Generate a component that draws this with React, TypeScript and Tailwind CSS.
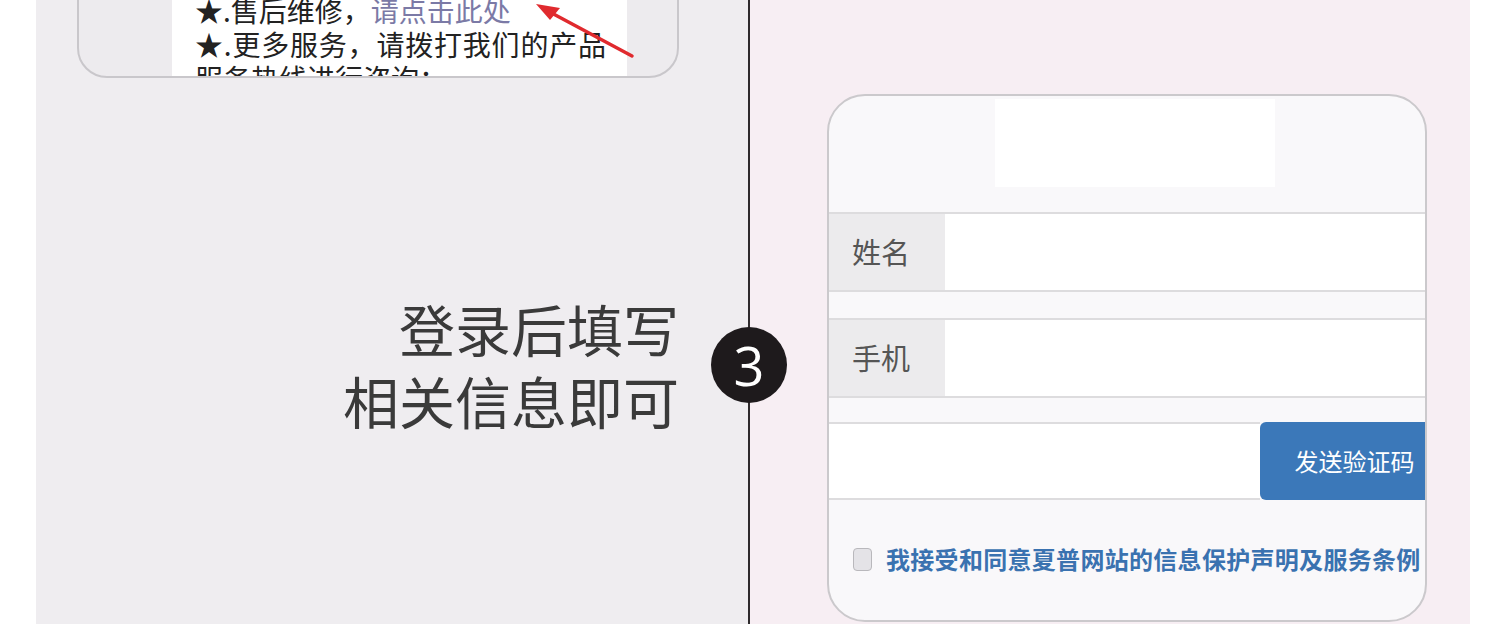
const cjk = { fontFamily: '"Noto Sans CJK SC", "Noto Sans", sans-serif' };

function ServiceCard() {
  return (
    <div className="relative ml-[41px] -mt-[60px] h-[138px] w-[602px] overflow-hidden rounded-b-[30px] border-2 border-[#c9c7cb] bg-[#edebee]">
      <div className="ml-[93px] h-full w-[455px] bg-white pl-[23px] pt-[51px] text-[28px] leading-[34px] text-[#222]">
        <p>
          ★.售后维修，<span className="text-[#7b7aa6]">请点击此处</span>
        </p>
        <p className="tracking-[0.8px]">★.更多服务，请拨打我们的产品</p>
        <p>服务热线进行咨询：</p>
      </div>
      <svg className="absolute left-0 top-0" width="602" height="138" viewBox="0 0 602 138">
        <g transform="translate(-79,58)">
          <line x1="632" y1="56" x2="546" y2="10" stroke="#e02a2e" strokeWidth="3.5" strokeLinecap="round" />
          <path d="M536 4 L560 8 L550 20 Z" fill="#e02a2e" />
        </g>
      </svg>
    </div>
  );
}

function FormRow({ label }: { label: string }) {
  return (
    <div className="flex h-[80px] border-y-2 border-[#dddcde]">
      <div className="flex w-[116px] items-center bg-[#ecebed] pl-[23px] text-[29px] text-[#555]">{label}</div>
      <div className="flex-1 bg-white" />
    </div>
  );
}

export default function App() {
  return (
    <div className="flex h-[624px] w-[1500px] overflow-hidden bg-white" style={cjk}>
      <div className="w-[36px] shrink-0 bg-white" />

      <div className="flex w-[712px] shrink-0 flex-col bg-[#efedf0]">
        <ServiceCard />
        <div className="mt-[214px] pr-[69px] text-right text-[56px] leading-[72px] text-[#3a3a3a]">
          <p>登录后填写</p>
          <p>相关信息即可</p>
        </div>
      </div>

      <div className="relative w-[2px] shrink-0 bg-[#2e2a2c]">
        <div className="absolute left-[-37px] top-[327px] flex h-[76px] w-[76px] items-center justify-center rounded-full bg-[#1e1a1c] text-[54px] leading-none text-white" style={{ fontFamily: '"Open Sans", "DejaVu Sans", sans-serif' }}>
          3
        </div>
      </div>

      <div className="w-[720px] shrink-0 bg-[#f7eef3] pl-[77px] pt-[94px]">
        <div className="flex h-[528px] w-[600px] flex-col overflow-hidden rounded-[38px] border-2 border-[#cbc9cc] bg-[#f9f8fa]">
          <div className="ml-[166px] mt-[3px] h-[88px] w-[280px] bg-white" />
          <div className="mt-[25px]">
            <FormRow label="姓名" />
          </div>
          <div className="mt-[26px]">
            <FormRow label="手机" />
          </div>
          <div className="mt-[24px] flex h-[78px]">
            <div className="w-[431px] border-y-2 border-[#dddcde] bg-white" />
            <div className="flex flex-1 items-center justify-center rounded-l-[6px] bg-[#3b78b9] pl-[24px] text-[24px] text-white">
              发送验证码
            </div>
          </div>
          <div className="mt-[41px] flex items-center pl-[24px]">
            <div className="h-[23px] w-[19px] rounded-[4px] border border-[#b9b8bc] bg-[#e4e3e7]" />
            <span className="ml-[14px] text-[24px] font-bold tracking-[0.3px] text-[#3a72b0]">
              我接受和同意夏普网站的信息保护声明及服务条例
            </span>
          </div>
        </div>
      </div>

      <div className="flex-1 bg-white" />
    </div>
  );
}
